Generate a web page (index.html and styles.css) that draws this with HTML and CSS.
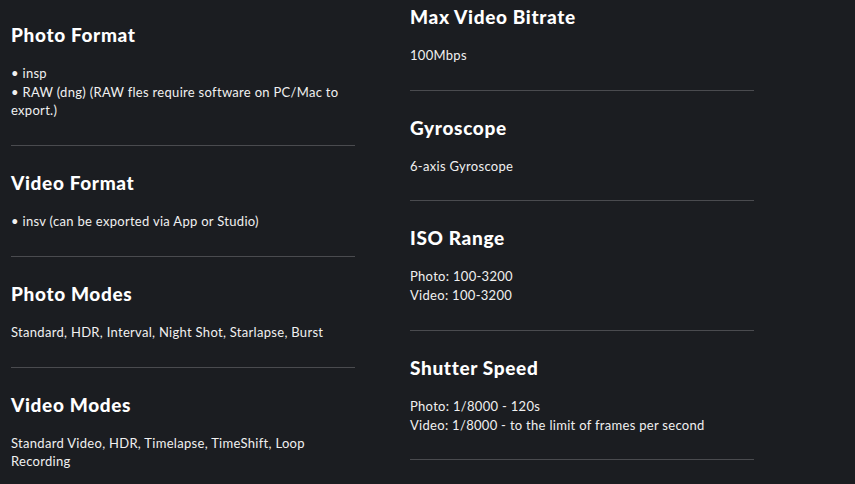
FILE: index.html
```html
<!DOCTYPE html>
<html lang="en">
<head>
<meta charset="utf-8">
<title>Specs</title>
<link rel="stylesheet" href="styles.css">
</head>
<body>
<div class="specs">
  <div class="col col-left">
    <div class="item">
      <h3>Photo Format</h3>
      <p>• insp<br>• RAW (dng) (RAW fles require software on PC/Mac to export.)</p>
    </div>
    <div class="item">
      <h3>Video Format</h3>
      <p>• insv (can be exported via App or Studio)</p>
    </div>
    <div class="item">
      <h3>Photo Modes</h3>
      <p>Standard, HDR, Interval, Night Shot, Starlapse, Burst</p>
    </div>
    <div class="item">
      <h3>Video Modes</h3>
      <p>Standard Video, HDR, Timelapse, TimeShift, Loop Recording</p>
    </div>
  </div>
  <div class="col col-right">
    <div class="item">
      <h3>Max Video Bitrate</h3>
      <p>100Mbps</p>
    </div>
    <div class="item">
      <h3>Gyroscope</h3>
      <p>6-axis Gyroscope</p>
    </div>
    <div class="item">
      <h3>ISO Range</h3>
      <p>Photo: 100-3200<br>Video: 100-3200</p>
    </div>
    <div class="item">
      <h3>Shutter Speed</h3>
      <p>Photo: 1/8000 - 120s<br>Video: 1/8000 - to the limit of frames per second</p>
    </div>
  </div>
</div>
</body>
</html>
```
FILE: styles.css
```css
html, body {
  margin: 0;
  padding: 0;
  background: #1b1d21;
  height: 100%;
  overflow: hidden;
}
body {
  font-family: Lato, "Open Sans", Arial, sans-serif;
  color: #ffffff;
}
.specs {
  display: flex;
  gap: 55px;
  padding-left: 11px;
  align-items: flex-start;
}
.col {
  width: 344px;
  display: flex;
  flex-direction: column;
}
.col-left {
  margin-top: -2px;
}
.col-right {
  margin-top: -20px;
}
.item {
  padding: 25px 0 25px;
  border-bottom: 1px solid #4a4b4f;
}
.item h3 {
  margin: 0 0 17px;
  font-size: 19px;
  line-height: 24px;
  font-weight: 900;
  letter-spacing: 0.65px;
  color: #ffffff;
}
.item p {
  margin: 0;
  font-size: 13px;
  line-height: 18.7px;
  letter-spacing: 0.3px;
  color: #f0f0f0;
}
```
